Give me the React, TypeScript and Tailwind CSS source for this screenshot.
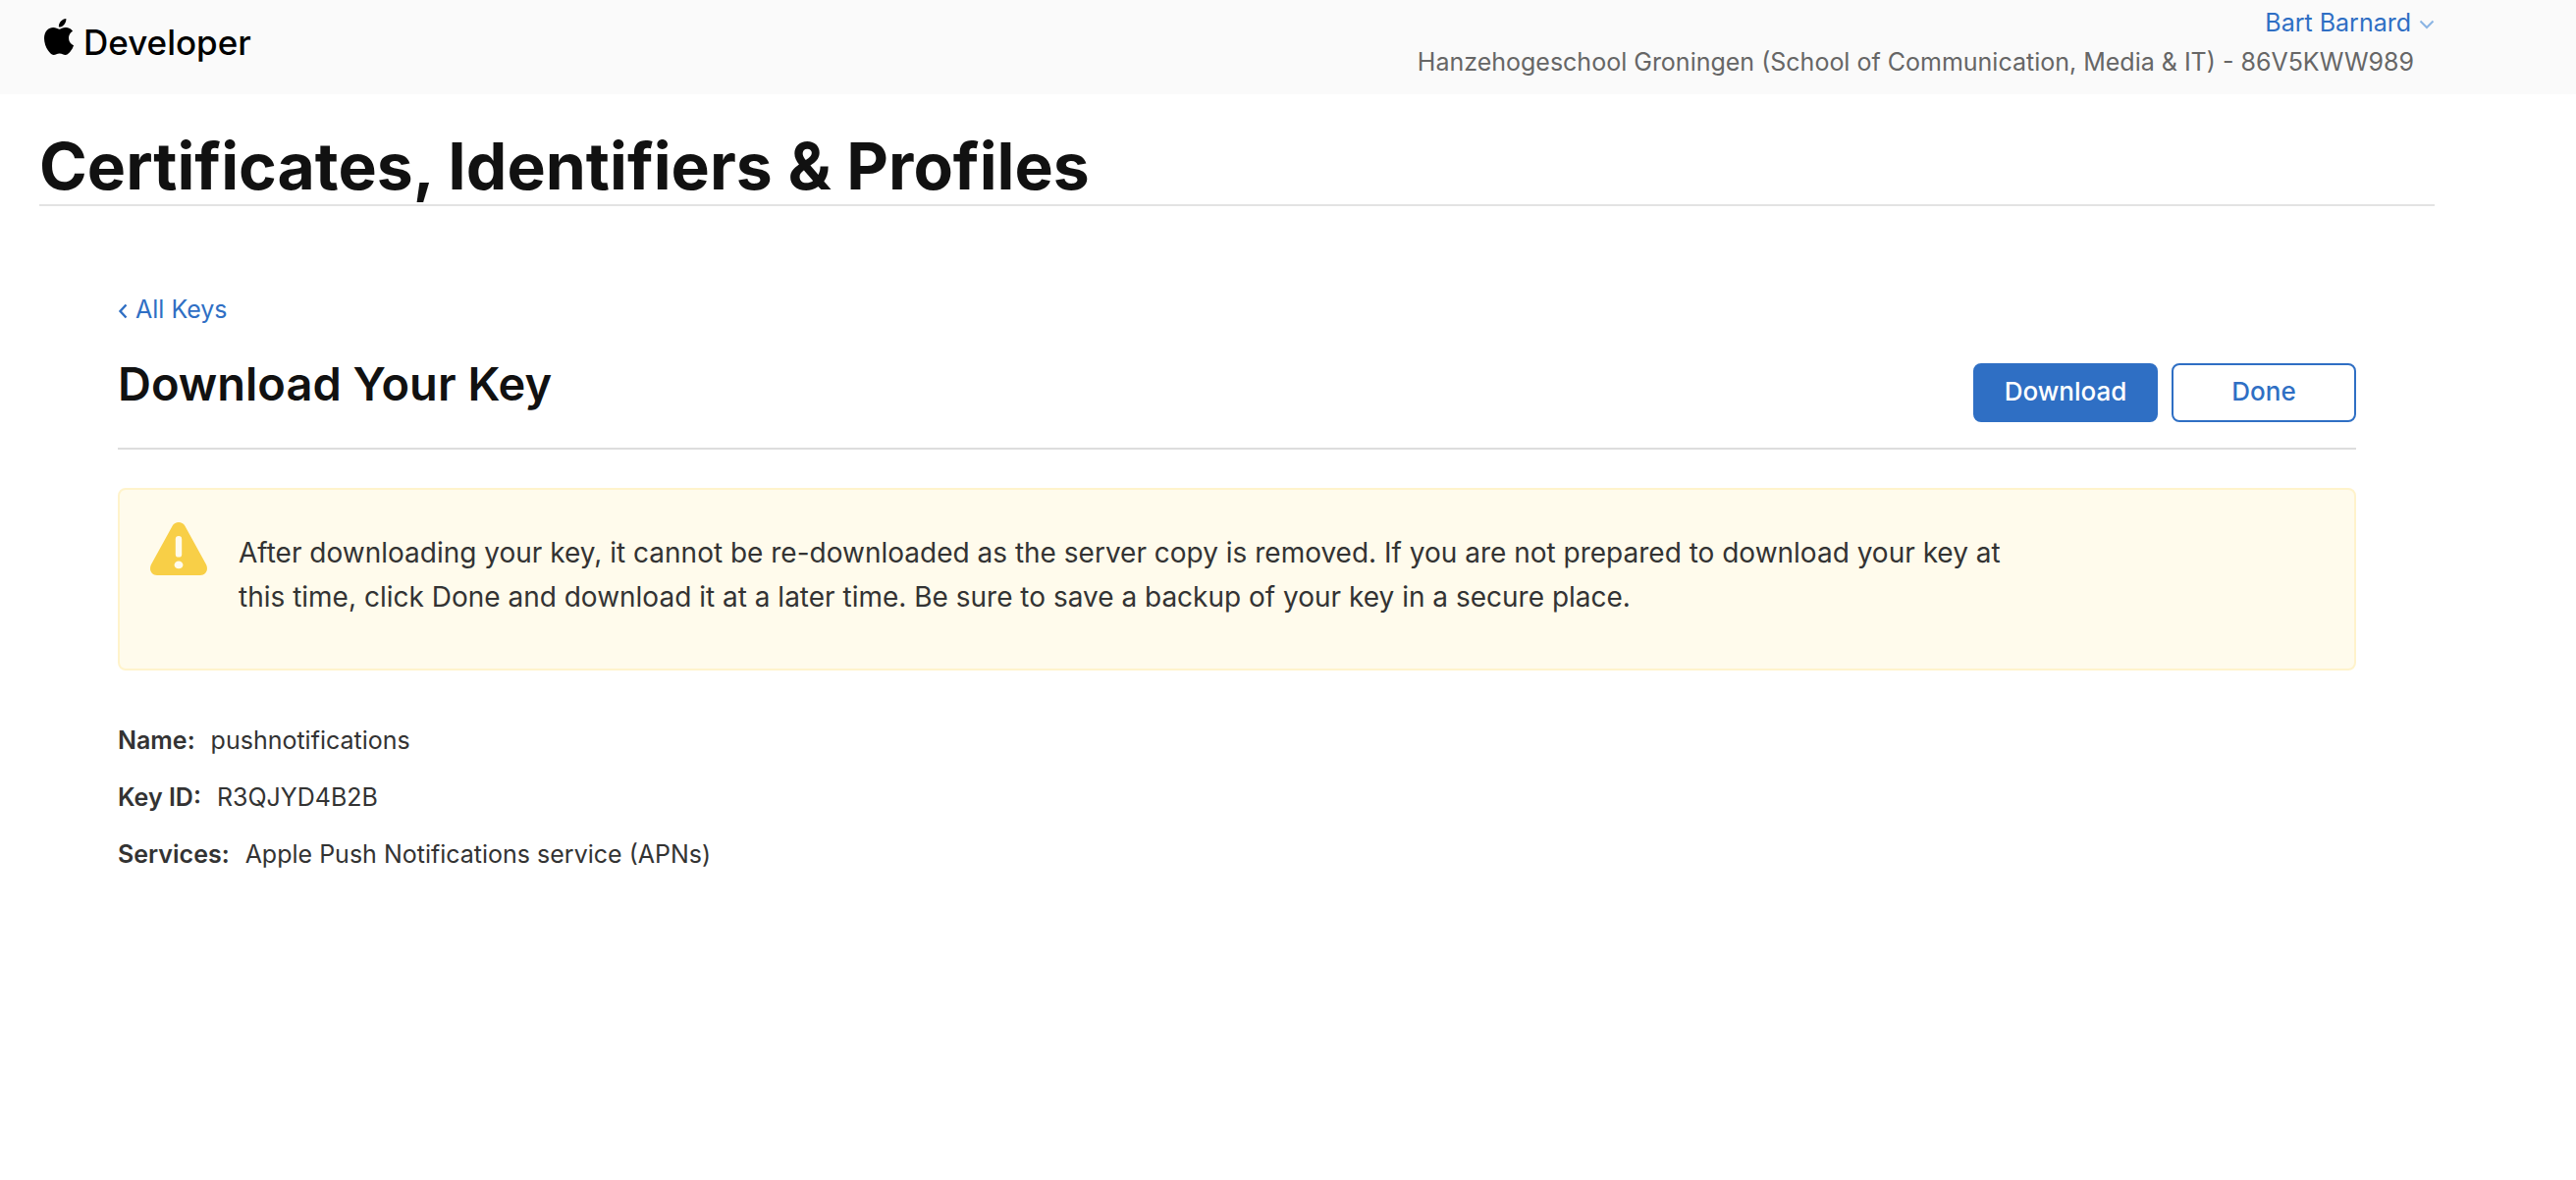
type Detail = { label: string; value: string };

const details: Detail[] = [
  { label: "Name:", value: "pushnotifications" },
  { label: "Key ID:", value: "R3QJYD4B2B" },
  { label: "Services:", value: "Apple Push Notifications service (APNs)" },
];

function AppleLogo() {
  return (
    <svg viewBox="0 0 814 1000" className="h-[37px] w-[30px]" fill="currentColor" aria-hidden="true">
      <path d="M788.1 340.9c-5.8 4.5-108.2 62.2-108.2 190.5 0 148.4 130.3 200.9 134.2 202.2-.6 3.2-20.7 71.9-68.7 141.9-42.8 61.6-87.5 123.1-155.5 123.1s-85.5-39.5-164-39.5c-76.5 0-103.7 40.8-165.9 40.8s-105.6-57-155.5-127C46.7 790.7 0 663 0 541.8c0-194.4 126.4-297.5 250.8-297.5 66.1 0 121.2 43.4 162.7 43.4 39.5 0 101.1-46 176.3-46 28.5 0 130.9 2.6 198.3 99.2zm-234-181.5c31.1-36.9 53.1-88.1 53.1-139.3 0-7.1-.6-14.3-1.9-20.1-50.6 1.9-110.8 33.7-147.1 75.8-28.5 32.4-55.1 83.6-55.1 135.5 0 7.8 1.3 15.6 1.9 18.1 3.2.6 8.4 1.3 13.6 1.3 45.4 0 102.5-30.4 135.5-71.3z" />
    </svg>
  );
}

function WarningIcon() {
  return (
    <svg viewBox="0 0 58 54" className="h-[54px] w-[58px] shrink-0" aria-hidden="true">
      <path
        d="M22.6 3.8C25.3-1.2 32.7-1.2 35.4 3.8L57 43C59.6 48.4 56.8 54 51 54H7C1.2 54-1.6 48.4 1 43Z"
        fill="#f8cf47"
      />
      <path d="M29 17.2V32.4" stroke="#fffbec" strokeWidth="6.4" strokeLinecap="round" />
      <ellipse cx="29" cy="43.4" rx="4.4" ry="3.9" fill="#fffbec" />
    </svg>
  );
}

function Header() {
  return (
    <header className="flex h-24 items-start justify-between bg-[#fafafa] pr-36 pl-[45px]">
      <a href="#developer" className="flex gap-[10px] pt-[19px] text-black">
        <AppleLogo />
        <span className="text-[35px] leading-[48px] font-medium">Developer</span>
      </a>
      <div className="flex flex-col items-end pt-[3px] text-[25px] leading-10">
        <button type="button" className="flex items-center gap-2 text-[#2f6fc4]">
          Bart Barnard
          <svg viewBox="0 0 16 10" className="mt-1 h-[10px] w-4" fill="none" aria-hidden="true">
            <path d="M1.5 1.5 8 8l6.5-6.5" stroke="#8ab4e4" strokeWidth="2" />
          </svg>
        </button>
        <p className="pr-[21px] text-[#666666]">
          Hanzehogeschool Groningen (School of Communication, Media &amp; IT) - 86V5KWW989
        </p>
      </div>
    </header>
  );
}

export default function App() {
  return (
    <div className="min-h-screen bg-white font-['Inter',sans-serif] text-[#333333]">
      <Header />
      <main className="pr-36 pl-10">
        <h1 className="border-b-2 border-[#e3e3e3] pt-[34px] text-[66px] leading-[78px] font-bold text-[#111111]">
          Certificates, Identifiers &amp; Profiles
        </h1>
        <div className="px-20 pt-[85px]">
          <a href="#keys" className="inline-flex items-center gap-2 text-[25px] leading-10 text-[#2f6fc4]">
            <svg viewBox="0 0 10 16" className="mt-1 h-4 w-[10px]" fill="none" aria-hidden="true">
              <path d="M8.5 1.5 2.5 8l6 6.5" stroke="currentColor" strokeWidth="2.4" />
            </svg>
            All Keys
          </a>
          <div className="flex items-start justify-between border-b-2 border-[#dddddd] pt-[26px] pb-[26px]">
            <h2 className="text-[47px] leading-[60px] font-semibold text-[#111111]">Download Your Key</h2>
            <div className="mt-[9px] flex gap-[14px] text-[26px] font-medium">
              <button
                type="button"
                className="h-[60px] w-[188px] rounded-lg border-2 border-[#2f6fc4] bg-[#2f6fc4] pb-[3px] text-white"
              >
                Download
              </button>
              <button
                type="button"
                className="h-[60px] w-[188px] rounded-lg border-2 border-[#2f6fc4] bg-white pb-[3px] text-[#2f6fc4]"
              >
                Done
              </button>
            </div>
          </div>
          <section className="mt-[39px] flex gap-8 rounded-lg border-2 border-[#fff3cb] bg-[#fffbec] px-[31px] pt-[33px] pb-[50px]">
            <WarningIcon />
            <p className="max-w-[1840px] pt-[9px] text-[28px] leading-[45px]">
              After downloading your key, it cannot be re-downloaded as the server copy is removed. If you are not
              prepared to download your key at this time, click Done and download it at a later time. Be sure to save
              a backup of your key in a secure place.
            </p>
          </section>
          <dl className="mt-[51px] flex flex-col gap-[18px] text-[25px] leading-10">
            {details.map((d) => (
              <div key={d.label} className="flex gap-4">
                <dt className="font-semibold">{d.label}</dt>
                <dd>{d.value}</dd>
              </div>
            ))}
          </dl>
        </div>
      </main>
    </div>
  );
}
